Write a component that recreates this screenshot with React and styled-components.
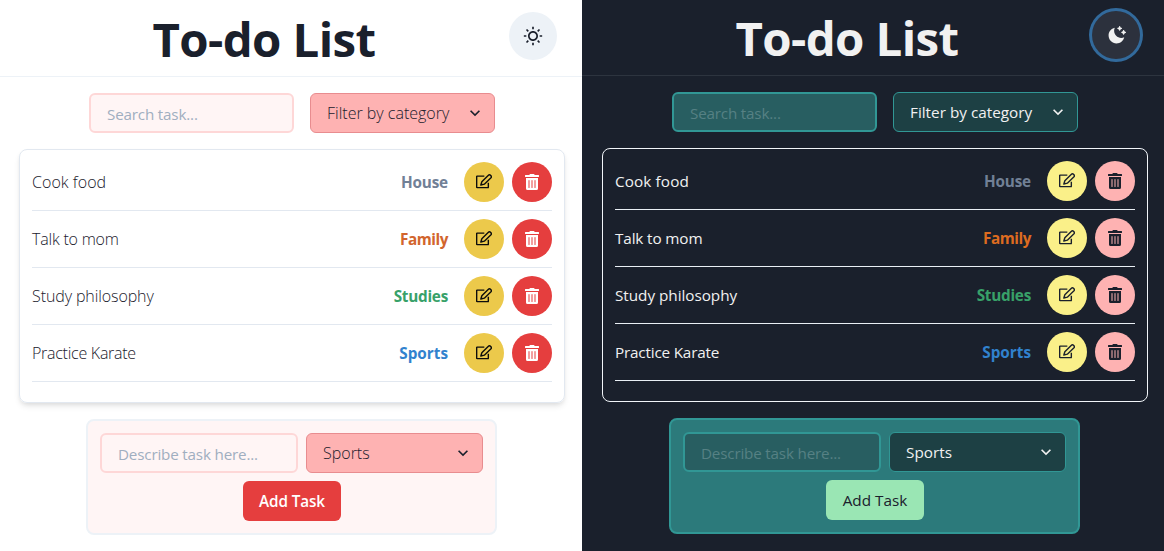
import React from "react";
import styled, { createGlobalStyle, ThemeProvider } from "styled-components";
import { RiSunLine, RiMoonClearFill } from "react-icons/ri";
import { FaTrashAlt } from "react-icons/fa";

const light = {
  bg: "#ffffff", text: "#1a202c", line: "#edf2f7", weight: 300, size: "16px",
  toggleBg: "#edf2f7", ring: "none", inputBg: "#fff5f5", inputBorder: "#fed7d7",
  placeholder: "#a0aec0", selectBg: "#feb2b2", selectBorder: "#e88c8f",
  cardBorder: "#e2e8f0", cardShadow: "0 4px 6px -1px rgba(0,0,0,.1), 0 2px 4px -1px rgba(0,0,0,.06)",
  rowLine: "#e2e8f0", editBg: "#ecc94b", editFg: "#0c0c0c", delBg: "#e53e3e", delFg: "#ffffff",
  formBg: "#fff5f5", formBorder: "#edf2f7", addBg: "#e53e3e", addFg: "#ffffff", addWeight: 600,
  top: "0px", nudge: "2px", family: "#d2652d", tracking: 0,
};
const dark = {
  bg: "#1a202c", text: "#f1f1f1", line: "#2d343f", weight: 400, size: "15.3px",
  toggleBg: "#2c313d", ring: "0 0 0 3px #326a9c", inputBg: "#285e61", inputBorder: "#319795",
  placeholder: "#568184", selectBg: "#1d4044", selectBorder: "#319795",
  cardBorder: "#f1f5f9", cardShadow: "none",
  rowLine: "#e9eff5", editBg: "#faf089", editFg: "#1a202c", delBg: "#feb2b2", delFg: "#1a202c",
  formBg: "#2c7a7b", formBorder: "#319795", addBg: "#9ae6b4", addFg: "#1a202c", addWeight: 500,
  top: "-1px", nudge: "4px", family: "#dd6b20", tracking: 0.06,
};

const Global = createGlobalStyle`
  *, *::before, *::after { box-sizing: border-box; }
  body { margin: 0; overflow: hidden; background: #fff; }
  button, input { font: inherit; margin: 0; }
`;
const Screens = styled.div`
  display: grid;
  grid-template-columns: 582px 582px;
  height: 551px;
  font-family: "Open Sans", "Noto Sans", sans-serif;
`;
const Panel = styled.section`
  background: ${(p) => p.theme.bg};
  color: ${(p) => p.theme.text};
  font-size: ${(p) => p.theme.size};
  font-weight: ${(p) => p.theme.weight};
  line-height: 24px;
  overflow: hidden;
`;
const Header = styled.header`
  display: flex;
  align-items: center;
  justify-content: space-between;
  height: calc(77px + ${(p) => p.theme.top});
  padding-top: calc(12px + ${(p) => p.theme.top});
  padding-bottom: 16px;
  padding-left: calc(151.5px + ${(p) => p.theme.nudge} / 2);
  padding-right: calc(26px - ${(p) => p.theme.nudge} / 2);
  border-bottom: 1px solid ${(p) => p.theme.line};
`;
const Title = styled.h1`
  margin: 0;
  padding-top: 5px;
  font-size: 47.4px;
  font-weight: 700;
  line-height: 48px;
  letter-spacing: -0.6px;
  white-space: nowrap;
`;
const RoundButton = styled.button`
  display: grid;
  place-items: center;
  flex: none;
  width: ${(p) => p.$size}px;
  height: ${(p) => p.$size}px;
  padding: 0;
  border: 0;
  border-radius: 50%;
  color: ${(p) => p.$fg};
  background: ${(p) => p.$bg};
  box-shadow: ${(p) => p.$ring || "none"};
  svg { display: block; }
`;
const Content = styled.main`
  display: flex;
  flex-direction: column;
  align-items: center;
  gap: 16px;
  padding: 16px 0 0 ${(p) => p.theme.nudge};
`;
const Filters = styled.div`
  display: flex;
  gap: 16px;
`;
const Input = styled.input`
  width: ${(p) => p.$width}px;
  height: 40px;
  padding: 1px 16px 0;
  border: 2px solid ${(p) => p.theme.inputBorder};
  border-radius: 6px;
  outline: 0;
  background: ${(p) => p.theme.inputBg};
  color: inherit;
  font-size: 15.2px;
  font-weight: 400;
  letter-spacing: -0.17px;
  &::placeholder { color: ${(p) => p.theme.placeholder}; opacity: 1; }
`;
const Select = styled.button`
  display: flex;
  align-items: center;
  justify-content: space-between;
  width: ${(p) => p.$width}px;
  height: 40px;
  padding: 0 9px 0 16px;
  border: 1px solid ${(p) => p.theme.selectBorder};
  border-radius: 6px;
  background: ${(p) => p.theme.selectBg};
  color: inherit;
  white-space: nowrap;
`;
const Card = styled.ul`
  width: 546px;
  height: 254px;
  margin: 0;
  padding: 4px 12px 20px;
  list-style: none;
  border: 1px solid ${(p) => p.theme.cardBorder};
  border-radius: 8px;
  box-shadow: ${(p) => p.theme.cardShadow};
`;
const Row = styled.li`
  display: flex;
  align-items: center;
  gap: 8px;
  height: 57px;
  border-bottom: 1px solid ${(p) => p.theme.rowLine};
`;
const TaskName = styled.span`
  flex: 1;
  letter-spacing: ${(p) => p.$tracking + p.theme.tracking}px;
`;
const Category = styled.span`
  margin-right: 8px;
  color: ${(p) => p.$color};
  font-size: 15.3px;
  font-weight: 700;
  letter-spacing: ${(p) => p.$tracking}px;
`;
const Form = styled.form`
  display: flex;
  flex-direction: column;
  align-items: center;
  gap: 8px;
  width: 411px;
  margin-right: 1px;
  padding: 12px;
  border: 2px solid ${(p) => p.theme.formBorder};
  border-radius: 8px;
  background: ${(p) => p.theme.formBg};
`;
const Fields = styled.div`
  display: flex;
  gap: 8px;
`;
const AddButton = styled.button`
  width: 98px;
  height: 40px;
  padding: 0;
  margin-left: 1px;
  border: 0;
  border-radius: 6px;
  background: ${(p) => p.theme.addBg};
  color: ${(p) => p.theme.addFg};
  font-size: 15.3px;
  font-weight: ${(p) => p.theme.addWeight};
  letter-spacing: ${(p) => (p.theme.addWeight === 600 ? -0.1 : 0)}px;
`;

const Chevron = () => (
  <svg width="20" height="20" viewBox="0 0 24 24" fill="currentColor">
    <path d="M16.59 8.59L12 13.17 7.41 8.59 6 10l6 6 6-6z" />
  </svg>
);
const EditIcon = () => (
  <svg width="16" height="16" viewBox="0 0 48 48" fill="none" stroke="currentColor" strokeWidth="4.2" strokeLinejoin="round">
    <path d="M25 6.500H3.500Q2 6.500 2 8V39.500Q2 41 3.500 41H35.500Q37 41 37 39.500V26" />
    <path d="M14.500 33L17.500 23.500L36.500 4.500A5.400 5.400 0 0 1 44.200 12.200L25 30.500Z" />
  </svg>
);

const tasks = [
  { name: "Cook food", nameTracking: 0.05, category: "House", tracking: -0.15, color: "#718096" },
  { name: "Talk to mom", nameTracking: -0.2, category: "Family", tracking: -0.45 },
  { name: "Study philosophy", nameTracking: -0.1, category: "Studies", tracking: -0.25, color: "#38a169" },
  { name: "Practice Karate", nameTracking: -0.26, category: "Sports", tracking: 0, color: "#3182ce" },
];

function TodoScreen({ theme, icon }) {
  return (
    <ThemeProvider theme={theme}>
      <Panel>
        <Header>
          <Title>To-do List</Title>
          <RoundButton $size={48} $fg={theme.text} $bg={theme.toggleBg} $ring={theme.ring} aria-label="Toggle theme">
            {icon}
          </RoundButton>
        </Header>
        <Content>
          <Filters>
            <Input $width={205} placeholder="Search task..." />
            <Select $width={185}>Filter by category<Chevron /></Select>
          </Filters>
          <Card>
            {tasks.map((task) => (
              <Row key={task.name}>
                <TaskName $tracking={task.nameTracking}>{task.name}</TaskName>
                <Category $color={task.color || theme.family} $tracking={task.tracking}>{task.category}</Category>
                <RoundButton $size={40} $fg={theme.editFg} $bg={theme.editBg} aria-label="Edit"><EditIcon /></RoundButton>
                <RoundButton $size={40} $fg={theme.delFg} $bg={theme.delBg} aria-label="Delete"><FaTrashAlt size={16} /></RoundButton>
              </Row>
            ))}
          </Card>
          <Form>
            <Fields>
              <Input $width={198} placeholder="Describe task here..." />
              <Select type="button" $width={177}>Sports<Chevron /></Select>
            </Fields>
            <AddButton type="button">Add Task</AddButton>
          </Form>
        </Content>
      </Panel>
    </ThemeProvider>
  );
}

export default function App() {
  return (
    <>
      <Global />
      <Screens>
        <TodoScreen theme={light} icon={<RiSunLine size={20} />} />
        <TodoScreen theme={dark} icon={<RiMoonClearFill size={19} />} />
      </Screens>
    </>
  );
}
